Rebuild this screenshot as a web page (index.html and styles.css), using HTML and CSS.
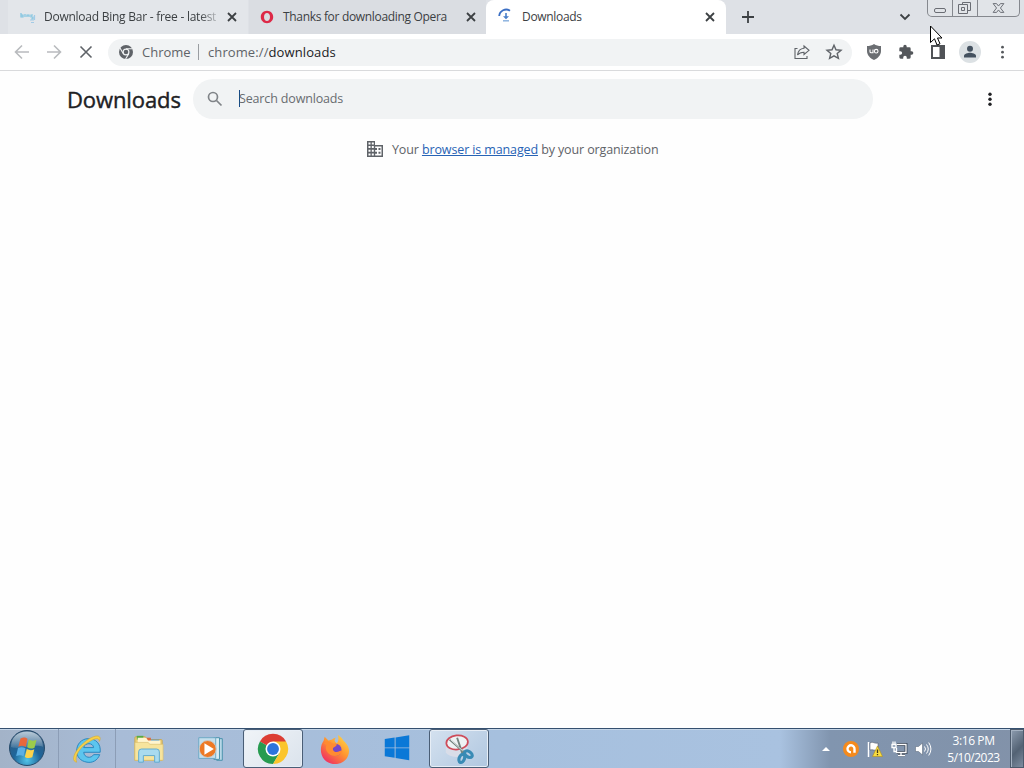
FILE: index.html
```
<!DOCTYPE html>
<html lang="en">
<head>
  <meta charset="UTF-8">
  <title>Downloads</title>
  <link rel="stylesheet" href="styles.css">
</head>
<body>
  <div class="tab-strip">
    <div class="tab tab-first">
      <svg class="favicon" viewBox="0 0 16 16">
        <g fill="none" stroke="#7fc4e0" stroke-width="1.2">
          <path d="M1 4v4h2V6H1M5 5v3M7 8V6h2v2M13 6h-2v2h2v2h-2" />
          <path d="M10 11h4M11 13.500h3M14.500 6v5" stroke="#a3cbe6" />
        </g>
      </svg>
      <span class="tab-title faded">Download Bing Bar - free - latest</span>
      <svg class="close" viewBox="0 0 10 10"><path d="M1 1l8 8M9 1L1 9" /></svg>
    </div>
    <div class="tab tab-second">
      <svg class="favicon" viewBox="0 0 16 16">
        <path fill="#dd2947" fill-rule="evenodd" d="M8 1.800c3.600 0 6.200 2.800 6.200 6.200S11.600 14.200 8 14.200 1.800 11.400 1.800 8 4.400 1.800 8 1.800zM8 4C6.400 4 5 5.600 5 8s1.400 4 3 4 3-1.600 3-4S9.600 4 8 4z" />
      </svg>
      <span class="tab-title">Thanks for downloading Opera</span>
      <svg class="close" viewBox="0 0 10 10"><path d="M1 1l8 8M9 1L1 9" /></svg>
    </div>
    <div class="tab tab-active">
      <svg class="favicon" viewBox="0 0 16 16">
        <path d="M1.200 8A7 7 0 0 1 12 2.700" fill="none" stroke="#3b6fc4" stroke-width="1.800" />
        <path d="M7.200 5h1.600v3.200h2.200L8 11.200 5 8.200h2.200z" fill="#4a7fc9" />
        <path d="M5 12.800h6" stroke="#8eb4e0" stroke-width="1.500" />
      </svg>
      <span class="tab-title">Downloads</span>
      <svg class="close" viewBox="0 0 10 10"><path d="M1 1l8 8M9 1L1 9" /></svg>
    </div>
    <svg class="new-tab" viewBox="0 0 14 14"><path d="M7 1v12M1 7h12" /></svg>
    <svg class="tab-search" viewBox="0 0 12 12"><path d="M1.500 3.500L6 8l4.500-4.500" /></svg>
    <div class="window-buttons">
      <svg class="win-min" viewBox="0 0 24 16"><rect x="6.500" y="8.500" width="11" height="4" rx="1.500" /></svg>
      <svg class="win-max" viewBox="0 0 24 16"><path d="M9.500 4.500v-2h8v8h-3M5.500 4.500h9v9h-9zM8.500 7.500h3v3h-3z" /></svg>
      <svg class="win-close" viewBox="0 0 42 16"><path d="M15.500 3.500h3.500l2 2.500 2-2.500h3.500L23 8l3.500 4.500H23L21 10l-2 2.500h-3.500L19 8z" /></svg>
    </div>
  </div>

  <div class="toolbar">
    <div class="tool nav"><svg viewBox="0 0 16 16"><path d="M15 8H2M8 1.500L1.500 8 8 14.500" /></svg></div>
    <div class="tool nav"><svg viewBox="0 0 16 16"><path d="M1 8h13M8 1.500L14.500 8 8 14.500" /></svg></div>
    <div class="tool stop"><svg viewBox="0 0 16 16"><path d="M2.500 2.500l11 11M13.500 2.500l-11 11" /></svg></div>
    <div class="omnibox">
      <svg class="chrome-gray" viewBox="0 0 16 16">
        <circle cx="8" cy="8" r="7" fill="#5f6368" />
        <circle cx="8" cy="8" r="2.900" fill="#5f6368" stroke="#f1f3f4" stroke-width="1.200" />
        <path d="M8 4.800h6.500M5.200 9.600L2 4M10.800 9.600L7.600 15" stroke="#f1f3f4" stroke-width="1.100" />
      </svg>
      <span class="chip">Chrome</span>
      <span class="divider"></span>
      <span class="url">chrome://<b>downloads</b></span>
      <div class="tool outline share"><svg viewBox="0 0 18 18"><path d="M4.500 5.500H2v10h12V13" /><path d="M11 3l5 4.300-5 4.200V9.200C8 9.200 6 10 4.500 12 5 8.500 7 5.700 11 5.300z" /></svg></div>
      <div class="tool outline star"><svg viewBox="0 0 18 18"><path d="M9 2.200l2 4.600 5 .4-3.800 3.300 1.200 4.900L9 12.800l-4.400 2.600 1.200-4.900L2 7.200l5-.4z" /></svg></div>
    </div>
    <div class="tool"><svg viewBox="0 0 16 16">
      <path fill="#6b6e72" d="M8 0c2 1.500 4.500 2 7 2v5c0 4-3 7.200-7 9-4-1.800-7-5-7-9V2c2.500 0 5-.500 7-2z" />
      <path d="M4 5.500v2.300q0 1 1.200 1H7V5.500" fill="none" stroke="#fff" stroke-width="1.100" />
      <circle cx="10.200" cy="7.200" r="1.800" fill="none" stroke="#fff" stroke-width="1.100" />
    </svg></div>
    <div class="tool"><svg viewBox="0 0 24 24"><path fill="#54575b" d="M20.500 11H19V7a2 2 0 0 0-2-2h-4V3.500a2.500 2.500 0 0 0-5 0V5H4a2 2 0 0 0-2 2v3.800h1.500a2.700 2.700 0 0 1 0 5.400H2V20a2 2 0 0 0 2 2h3.800v-1.500a2.700 2.700 0 0 1 5.400 0V22H17a2 2 0 0 0 2-2v-4h1.500a2.500 2.500 0 0 0 0-5z" /></svg></div>
    <div class="tool"><svg viewBox="0 0 16 16"><path fill="#505357" fill-rule="evenodd" d="M1 1h14v14H1zM3 3v10h6.500V3z" /></svg></div>
    <div class="tool"><svg class="avatar" viewBox="0 0 22 22"><circle cx="11" cy="11" r="11" fill="#dce1e4" /><circle cx="11" cy="7.700" r="3" fill="#455260" /><path fill="#455260" d="M5 16.500v-1.800c0-2 4-3 6-3s6 1 6 3v1.800z" /></svg></div>
    <div class="tool"><svg viewBox="0 0 16 16" fill="#55585c"><circle cx="8.500" cy="3.200" r="1.400" /><circle cx="8.500" cy="8.200" r="1.400" /><circle cx="8.500" cy="13.200" r="1.400" /></svg></div>
  </div>

  <main class="page">
    <header class="page-header">
      <h1>Downloads</h1>
      <div class="search">
        <svg viewBox="0 0 16 16"><circle cx="6" cy="6" r="4.500" /><path d="M9.500 9.500l5 5" /></svg>
        <span class="caret"></span>
        <span class="placeholder">Search downloads</span>
      </div>
      <svg class="more" viewBox="0 0 16 16"><circle cx="8" cy="3.200" r="1.700" /><circle cx="8" cy="8.200" r="1.700" /><circle cx="8" cy="13.200" r="1.700" /></svg>
    </header>
    <div class="managed">
      <svg viewBox="0 0 18 18">
        <path fill="#5f6368" d="M1 1h8v4h8v12H1z" />
        <path fill="#fff" d="M2.500 2.500h2v2h-2zM5.800 2.500h2v2h-2zM2.500 6h2v2h-2zM5.800 6h2v2h-2zM2.500 9.700h2v2h-2zM5.800 9.700h2v2h-2zM2.500 13.400h2v2h-2zM5.800 13.400h2v2h-2zM9.200 6.500h6.300v9H9.200z" />
        <path fill="#5f6368" d="M9 8h2v2H9zM12.500 8h2v2h-2zM9 11.800h2v2H9zM12.500 11.800h2v2h-2z" />
      </svg>
      <span>Your <a href="#">browser is managed</a> by your organization</span>
    </div>
  </main>

  <footer class="taskbar">
    <div class="start">
      <svg viewBox="0 0 38 38">
        <defs>
          <radialGradient id="orb" cx=".5" cy=".85" r=".85"><stop offset="0" stop-color="#51c4e8" /><stop offset=".45" stop-color="#1e659a" /><stop offset="1" stop-color="#395b7c" /></radialGradient>
          <linearGradient id="shine" x2="0" y2="1"><stop offset="0" stop-color="#d6e5ef" stop-opacity=".8" /><stop offset="1" stop-color="#fff" stop-opacity=".1" /></linearGradient>
        </defs>
        <circle cx="19" cy="19" r="17.500" fill="url(#orb)" stroke="#274b6b" />
        <path d="M3 18C3 8 10 2.500 19 2.500S35 8 35 18c-9-4-22 4-32 0z" fill="url(#shine)" />
        <path fill="#e9683b" d="M12.500 9.500c3-1.700 5-1.200 7 .3L17.800 18c-2.300-1.500-4.500-1.700-7.500-.3z" />
        <path fill="#9bcb4b" d="M20.800 10.500c2.500 1.500 4.800 1.500 7.700.2l-2 8c-2.700 1.300-5 1-7.300-.4z" />
        <path fill="#5bafe5" d="M10 19c3-1.300 5.200-1 7.500.3l-2 8c-2-1.400-4.500-1.600-7.300-.3z" />
        <path fill="#fbd34c" d="M18.800 20c2.500 1.400 4.800 1.600 7.500.3l-2 8c-2.800 1.200-5 1-7.500-.4z" />
      </svg>
    </div>
    <div class="task split">
      <svg viewBox="0 0 34 34">
        <path d="M31 20.500H13.500c.5 6 8 7 10.500 2.500h6.500c-2.500 6.500-8 9-13.500 8C10 30 6 25 6 19 6 12 11 6 18.500 6 26 6 32 11 31 20.500zM13.500 15.500H24c-.3-5.500-9.500-5.500-10.500 0z" fill="#5cc5ee" stroke="#2583bd" fill-rule="evenodd" />
        <path d="M6 31C-1 30 4 18 14 10 22 3 31 1 31 6c0 1-.5 2-1 3 .3-4-4-4-10 0C10 14 3 25 6 31z" fill="#f7d04a" stroke="#d3a52c" stroke-width=".6" />
      </svg>
    </div>
    <div class="task">
      <svg viewBox="0 0 34 34">
        <path d="M3 4h10l2 3h15q1 0 1 1v21H2V5q0-1 1-1z" fill="#edcf77" stroke="#c9a653" />
        <path d="M4 3h7v4H4z" fill="#5aa943" /><path d="M12 5h7v4h-7z" fill="#df6b3d" /><path d="M19 7h9v4h-9z" fill="#4d96cc" />
        <path d="M5 5h9l2 3h13v5H5z" fill="#fff5cf" /><path d="M2 10h14l2 2h14v17H2z" fill="#f7e49d" stroke="#d9bf70" stroke-width=".7" />
        <path d="M6 31V20q0-3 3-3h16q3 0 3 3v11h-5v-7H11v7z" fill="#a9dbef" stroke="#5ca9cf" />
      </svg>
    </div>
    <div class="task">
      <svg viewBox="0 0 34 34">
        <path d="M23 6h6v23h-6z" fill="#b9d8e8" stroke="#438eaa" /><path d="M20 5h6v23h-6z" fill="#d9edf5" stroke="#438eaa" />
        <path d="M4 5h18v22H4z" fill="#c4dfed" stroke="#6aa6c3" />
        <circle cx="13.500" cy="17" r="9" fill="#ed7925" stroke="#c9cac9" /><path d="M10 11l10 6-10 6z" fill="#fff" />
      </svg>
    </div>
    <div class="task open current">
      <svg viewBox="0 0 34 34">
        <path d="M17 17L3.100 9A16 16 0 0 1 30.900 9z" fill="#dc3e34" />
        <path d="M17 17L3.100 9A16 16 0 0 0 17 33l7-12z" fill="#279b50" />
        <path d="M17 9h13.900A16 16 0 0 1 17 33l7-12z" fill="#fbc52c" />
        <circle cx="17" cy="17" r="8" fill="#fff" /><circle cx="17" cy="17" r="6.300" fill="#2d75dc" />
      </svg>
    </div>
    <div class="task">
      <svg viewBox="0 0 34 34">
        <defs><linearGradient id="fox" x1="1" y1="0" x2=".2" y2="1"><stop offset="0" stop-color="#ffe44a" /><stop offset=".5" stop-color="#ff9530" /><stop offset="1" stop-color="#ef2865" /></linearGradient></defs>
        <path d="M20 2c5 3 5 5 7 7 5 5 6 10 4 15-2 6-8 9-14 9C8 33 2 26 2 18c0-4 1-7 3-10l1-4 4 4 4-1c1-1 2-2 4-2-2 2-2 4 1 6 2-3 2-6 1-9z" fill="url(#fox)" />
        <circle cx="17.500" cy="18" r="6.500" fill="#7548c7" />
        <path d="M5 11c4-3 7-2 9 0l5 1c0 2-3 3-4 4-1 3 2 5 5 4 2 0 3-2 5-1-2 5-8 7-13 4-4-2-6-7-4-10z" fill="#ff8b31" />
      </svg>
    </div>
    <div class="task">
      <svg viewBox="0 0 34 34"><path fill="#0a78d7" d="M4 6.500l10.500-1.600V15.300H4zM15.500 4.700L30 2.500v12.800H15.500zM4 16.300h10.500v10L4 24.700zM15.500 16.300H30V29l-14.500-2.500z" /></svg>
    </div>
    <div class="task open">
      <svg viewBox="0 0 34 34">
        <path d="M3 12v9c5 6 17 6 23-1v-9z" fill="#d9dde8" />
        <ellipse cx="15" cy="10" rx="11.500" ry="7.500" fill="#eef3f4" stroke="#ce4c5a" stroke-width="1.800" transform="rotate(-6 15 10)" />
        <path d="M7 7l16 14M15 5l6 18" stroke="#74847f" stroke-width="2" /><path d="M8 7l13 12" stroke="#dfe6e5" />
        <g fill="none" stroke="#398bb5" stroke-width="3.400"><ellipse cx="20" cy="27" rx="2.800" ry="4.500" transform="rotate(20 20 27)" /><ellipse cx="27" cy="22.500" rx="2.800" ry="4.500" transform="rotate(-55 27 22.500)" /></g>
      </svg>
    </div>
    <div class="tray">
      <svg class="tray-arrow" viewBox="0 0 8 4"><path d="M0 4l4-4 4 4z" fill="#fff" /></svg>
      <svg viewBox="0 0 18 18"><circle cx="9" cy="9" r="8" fill="#f58a1c" /><path d="M12.500 12.800V9A3.500 3.500 0 1 0 9 12.300" fill="none" stroke="#fff" stroke-width="2.400" /></svg>
      <svg viewBox="0 0 18 18"><path d="M2.500 2v15" stroke="#fff" stroke-width="1.500" /><path d="M4 3c3-2 4 1 8 0v7c-4 1-5-1-8 0z" fill="#fff" stroke="#444b5a" stroke-width=".5" /><path d="M11.500 6l5 10.500h-10z" fill="#f8dc3f" stroke="#af8d20" stroke-width=".6" /><path d="M11.500 9.500v3.500M11.500 14v1.300" stroke="#44391a" stroke-width="1.300" /></svg>
      <svg viewBox="0 0 18 18"><g stroke="#303c4e" fill="none" stroke-width="2.800"><path d="M7 4.500h9v8H6.500M8 15h7" /></g><g stroke="#fff" fill="none" stroke-width="1.300"><path d="M7 4.500h9v8H6.500V8M8 15.500h7M11 12.500v3M2 4.500h4v3H2zM3 1.500v3M5 1.500v3M4 7.500v4h2.500" /></g></svg>
      <svg viewBox="0 0 18 18"><path d="M1.500 6.500h3L8.500 3v12l-4-3.500h-3z" fill="#fff" stroke="#505e70" stroke-width=".5" /><path d="M10.500 6.500q2 2.500 0 5M12.500 4.500q3.500 4.500 0 9M14.700 2.500q4.500 6.500 0 13" fill="none" stroke="#fff" /></svg>
    </div>
    <div class="clock"><span>3:16 PM</span><span class="date">5/10/2023</span></div>
    <div class="show-desktop"></div>
  </footer>

  <svg class="cursor" viewBox="0 0 13 21"><path d="M.500 1v16.500l4-3.700L7 20l3-1.200-2.500-5.800H12z" fill="#fff" stroke="#000" /></svg>
</body>
</html>
```
FILE: styles.css
```
body {
  margin: 0;
  width: 1024px;
  height: 768px;
  overflow: hidden;
  display: flex;
  flex-direction: column;
  background: #fefefe;
  font-family: "Open Sans", "Noto Sans", sans-serif;
  font-size: 12px;
  color: #3c4043;
}
svg {
  display: block;
  flex: none;
}
.tab-strip {
  display: flex;
  height: 34px;
  background: #dee1e6;
}
.tab {
  box-sizing: border-box;
  display: flex;
  align-items: center;
  height: 34px;
  padding: 0 11px 0 12px;
}
.tab-first {
  width: 240px;
  margin-left: 8px;
  background: #e3e6ea;
}
.tab-second {
  width: 237px;
  margin-left: 1px;
  padding-left: 10px;
  padding-right: 10px;
  background: #dadde2;
}
.tab-active {
  width: 240px;
  background: #fff;
  border-radius: 8px 8px 0 0;
}
.favicon {
  width: 16px;
  height: 16px;
  margin-right: 8px;
}
.tab-active .favicon {
  margin-bottom: 2px;
}
.tab-title {
  flex: 1;
  white-space: nowrap;
  line-height: 18px;
  letter-spacing: -0.32px;
}
.tab-title.faded {
  letter-spacing: -0.25px;
  -webkit-mask-image: linear-gradient(90deg, #000 90%, transparent 103%);
  mask-image: linear-gradient(90deg, #000 90%, transparent 103%);
}
.close {
  width: 10px;
  height: 10px;
  margin-left: 10px;
}
.close path, .new-tab path, .tab-search path {
  fill: none;
  stroke: #3c4043;
  stroke-width: 1.8;
}
.new-tab {
  width: 14px;
  height: 14px;
  margin: 10px 0 0 15px;
}
.tab-search {
  width: 12px;
  height: 12px;
  margin: 11px 0 0 auto;
}
.window-buttons {
  box-sizing: border-box;
  display: flex;
  width: 93px;
  height: 17px;
  margin: 0 4px 0 16px;
  border: 1px solid #85888e;
  border-top: 0;
  border-radius: 0 0 5px 5px;
  background: #e1e4e8;
}
.window-buttons svg {
  height: 16px;
  fill: none;
  stroke: #6a6d74;
}
.win-min, .win-max {
  width: 24px;
  border-right: 1px solid #85888e;
}
.win-close {
  width: 41px;
}
.toolbar {
  box-sizing: border-box;
  display: flex;
  align-items: center;
  height: 37px;
  padding-left: 6px;
  background: #fff;
  border-bottom: 1px solid #d9dadc;
}
.tool {
  display: flex;
  width: 32px;
  justify-content: center;
}
.tool svg {
  width: 16px;
  height: 16px;
}
.nav path, .stop path {
  fill: none;
  stroke: #b9bbbe;
  stroke-width: 1.6;
}
.stop path {
  stroke: #5f6368;
}
.omnibox {
  box-sizing: border-box;
  display: flex;
  align-items: center;
  width: 744px;
  height: 27px;
  margin: 0 6px;
  padding: 0 2px 0 10px;
  border-radius: 14px;
  background: #f1f3f4;
  font-size: 13px;
  color: #5f6368;
}
.chrome-gray {
  width: 16px;
  height: 16px;
  margin-right: 8px;
}
.divider {
  width: 1px;
  height: 16px;
  margin: 0 9px 0 8px;
  background: #9a9da1;
}
.chip {
  width: 48px;
}
.url {
  letter-spacing: 0.1px;
}
.url b {
  font-weight: normal;
  color: #202124;
}
.share {
  margin-left: auto;
}
.tool.outline svg {
  width: 18px;
  height: 18px;
  fill: none;
  stroke: #5f6368;
  stroke-width: 1.4;
}
.tool.share svg {
  stroke-width: 1.1;
}
.tool .avatar {
  width: 22px;
  height: 22px;
}
.page {
  flex: 1;
}
.page-header {
  display: flex;
  align-items: center;
  height: 56px;
  padding-left: 67px;
}
h1 {
  width: 126px;
  margin: 0;
  font-size: 22px;
  font-weight: 500;
  letter-spacing: -0.1px;
  -webkit-text-stroke: 0.4px #202124;
  color: #202124;
  white-space: nowrap;
}
.search {
  box-sizing: border-box;
  display: flex;
  align-items: center;
  width: 680px;
  height: 40px;
  margin-bottom: 1px;
  padding-left: 14px;
  border-radius: 20px;
  background: #f1f3f4;
}
.search svg {
  width: 16px;
  height: 16px;
  fill: none;
  stroke: #808488;
  stroke-width: 1.7;
}
.caret {
  width: 1px;
  height: 17px;
  margin-left: 16px;
  background: #174a86;
}
.placeholder {
  margin-left: -1px;
  font-size: 12.5px;
  letter-spacing: -0.15px;
  color: #686c70;
}
.more {
  width: 16px;
  height: 16px;
  margin-left: 109px;
  fill: #202124;
}
.managed {
  display: flex;
  align-items: center;
  height: 44px;
  padding-left: 366px;
  font-size: 12.5px;
  letter-spacing: -0.12px;
  color: #5f6368;
  white-space: nowrap;
}
.managed svg {
  width: 18px;
  height: 18px;
  margin-right: 8px;
}
.managed a {
  color: #2763b5;
}
.taskbar {
  box-sizing: border-box;
  display: flex;
  height: 40px;
  border-top: 1px solid #35506f;
  box-shadow: inset 0 1px #c5d6e8;
  background: linear-gradient(90deg, #a3b3c8 0, #a8bcd7 120px, #a6c0de 500px, #a9c2e0 780px, #8195af 830px, #8292a9 100%);
}
.start {
  width: 57px;
  padding-left: 8px;
  box-sizing: border-box;
}
.start svg {
  width: 38px;
  height: 38px;
}
.task {
  box-sizing: border-box;
  display: flex;
  align-items: center;
  justify-content: center;
  width: 60px;
  height: 39px;
  margin-right: 2px;
}
.task svg {
  width: 32px;
  height: 32px;
}
.split {
  width: 58px;
  margin: 0 3px 0 1px;
  border-left: 1px solid #8c9db6;
  border-right: 1px solid #8c9db6;
}
.open {
  border: 1px solid #4a5e76;
  border-radius: 3px;
  box-shadow: inset 0 0 0 1px #e7eef6;
  background: linear-gradient(135deg, #d4e1ef, #b0c7e0);
}
.current {
  background: linear-gradient(135deg, #f0f4f8, #dbe3ec);
}
.tray {
  display: flex;
  align-items: center;
  gap: 6px;
  margin-left: auto;
}
.tray svg {
  width: 18px;
  height: 18px;
}
.tray .tray-arrow {
  width: 8px;
  height: 4px;
  margin-right: 6px;
}
.clock {
  box-sizing: border-box;
  display: flex;
  flex-direction: column;
  justify-content: center;
  width: 78px;
  padding-left: 5px;
  text-align: center;
  line-height: 17px;
  letter-spacing: -0.4px;
  color: #fff;
}
.clock .date {
  letter-spacing: -0.5px;
}
.show-desktop {
  box-sizing: border-box;
  width: 14px;
  border: 1px solid #4c5a6c;
  box-shadow: inset 1px 1px #a5b2c2;
  background: linear-gradient(135deg, #8e9db0, #536274 55%, #7d8c9f);
}
.cursor {
  position: absolute;
  left: 930px;
  top: 25px;
  width: 13px;
  height: 21px;
}
```
